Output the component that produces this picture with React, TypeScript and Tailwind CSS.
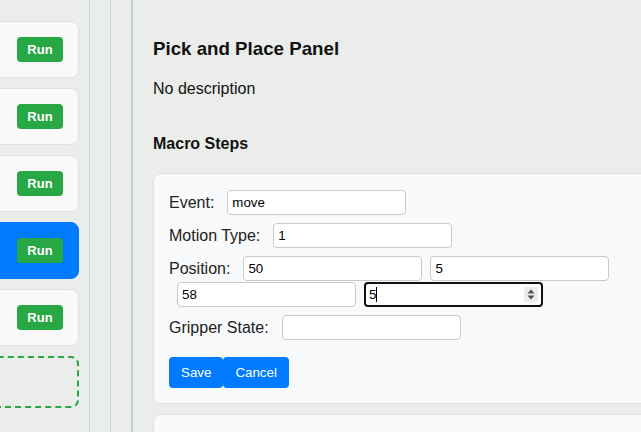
import React from "react";

const inputCls =
  "ml-2 h-[25px] w-[179px] rounded-[4px] border border-[#c9c9c9] bg-white px-[4px] text-[13.33px] text-black outline-none";

function SideCard({ active }: { active?: boolean }): React.ReactElement {
  return (
    <div
      className={
        "flex h-[57px] w-[220px] shrink-0 items-center justify-end rounded-lg border pr-[15px] " +
        (active ? "border-[#007bff] bg-[#007bff]" : "border-[#e1e1e1] bg-[#f9f9f9]")
      }
    >
      <button className="h-[25px] w-[46px] rounded-[4px] bg-[#28a745] text-[13px] font-bold text-white">
        Run
      </button>
    </div>
  );
}

function Field({ label, children }: { label: string; children: React.ReactNode }): React.ReactElement {
  return (
    <div className="mb-[8px] flex flex-wrap items-center gap-y-[1px]">
      <span className="pr-[5px] text-base leading-[18px] text-[#222]">{label}</span>
      {children}
    </div>
  );
}

export default function App(): React.ReactElement {
  return (
    <div className="flex h-[432px] w-[641px] overflow-hidden bg-[#ebedea] font-['Liberation_Sans',Arial,sans-serif] text-[#111]">
      <aside className="flex w-[90px] shrink-0 flex-col items-end gap-[10px] border-r border-[#c8d5de] pr-[10px] pt-[21px]">
        <SideCard />
        <SideCard />
        <SideCard />
        <SideCard active />
        <SideCard />
        <div className="h-[52px] w-[220px] shrink-0 rounded-lg border-2 border-dashed border-[#28a745]" />
      </aside>
      <div className="w-[21px] shrink-0 border-r border-[#c8d5de]" />
      <div className="w-[22px] shrink-0 border-r-2 border-[#bfcfda]" />

      <main className="w-[600px] shrink-0 pl-5">
        <h3 className="mt-[38px] text-[18.72px] font-bold leading-[22px]">Pick and Place Panel</h3>
        <p className="mt-5 text-base leading-[18px]">No description</p>
        <h4 className="mt-[37px] text-base font-bold leading-[18px]">Macro Steps</h4>

        <section className="mt-5 w-[560px] rounded-lg border border-[#dee2e6] bg-[#f8f9fa] px-[15px] pb-[15px] pt-4">
          <Field label="Event:">
            <input className={inputCls} defaultValue="move" />
          </Field>
          <Field label="Motion Type:">
            <input className={inputCls} defaultValue="1" />
          </Field>
          <Field label="Position:">
            <input className={inputCls} defaultValue="50" />
            <input className={inputCls} defaultValue="5" />
            <input className={inputCls} defaultValue="58" />
            <div className="ml-2 flex h-[25px] w-[179px] items-center rounded-[4px] border-2 border-[#111] bg-white pl-[3px] pr-[3px] text-[13.33px] text-black">
              <span>5</span>
              <span className="h-[15px] w-px bg-black" />
              <span className="ml-auto flex h-[15px] w-[14px] items-center justify-center bg-[#ececec]">
                <svg width="8" height="11" viewBox="0 0 8 11">
                  <path d="M4 0.5 L7.5 4.5 H0.5 Z" fill="#505050" />
                  <path d="M4 10.5 L7.5 6.5 H0.5 Z" fill="#505050" />
                </svg>
              </span>
            </div>
          </Field>
          <Field label="Gripper State:">
            <input className={inputCls} defaultValue="" />
          </Field>
          <div className="mt-[17px] flex">
            <button className="h-[31px] rounded-[4px] bg-[#007bff] px-3 text-[13.33px] text-white">Save</button>
            <button className="h-[31px] rounded-[4px] bg-[#007bff] px-3 text-[13.33px] text-white">Cancel</button>
          </div>
        </section>

        <section className="mt-[10px] h-[60px] w-[560px] rounded-lg border border-[#dee2e6] bg-[#f8f9fa]" />
      </main>
    </div>
  );
}
